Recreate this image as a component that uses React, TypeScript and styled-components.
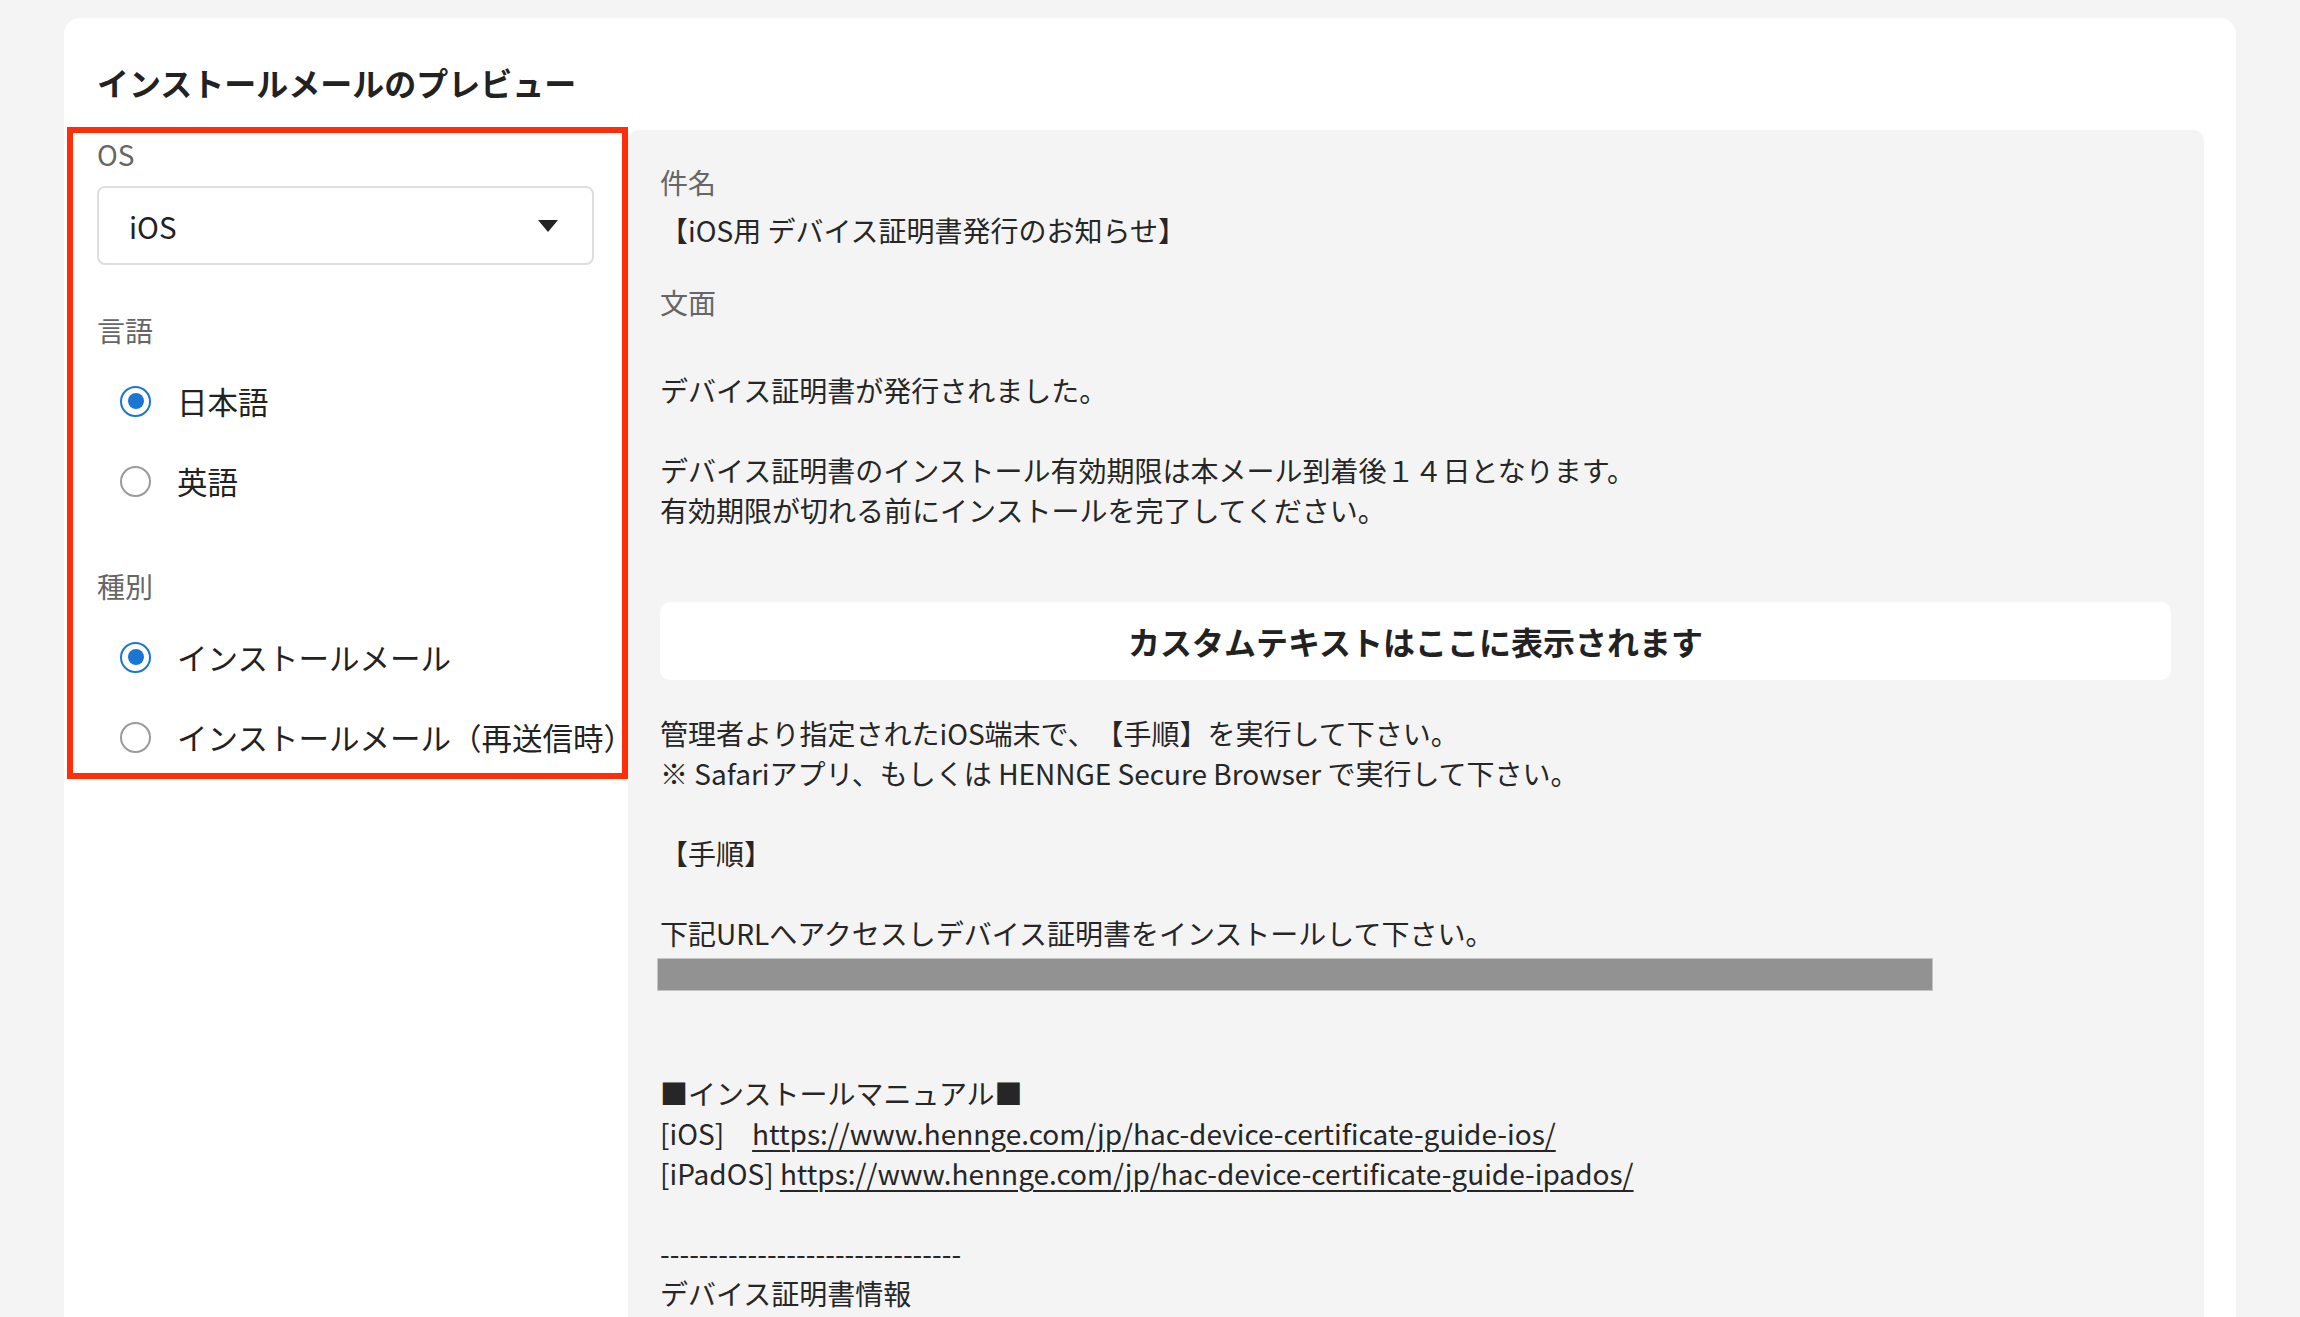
import styled, {createGlobalStyle} from 'styled-components';

const GlobalStyle = createGlobalStyle`
  body {
    margin: 0;
    background: #f4f4f4;
    color: #222;
    font-family: "Noto Sans CJK JP", "Noto Sans", sans-serif;
    text-spacing-trim: space-all;
  }
`;

const Page = styled.div`
  padding: 18px 64px 0;
`;

const Card = styled.section`
  background: #fff;
  border-radius: 16px 16px 0 0;
  padding: 40px 32px 0 33px;
  min-height: 1299px;
  box-sizing: border-box;
`;

const Heading = styled.h2`
  margin: 0 0 24px;
  font-size: 32px;
  line-height: 48px;
  font-weight: 700;
  color: #222;
`;

const Body = styled.div`
  display: flex;
  align-items: flex-start;
  gap: 34px;
`;

const Settings = styled.div`
  position: relative;
  flex: 0 0 497px;
  width: 497px;
  min-width: 0;
  padding-top: 4px;
`;

// red annotation frame drawn over the settings column
const Annotation = styled.div`
  position: absolute;
  top: -3px;
  left: -30px;
  right: -34px;
  bottom: -2px;
  border: 6.5px solid #ff2d0a;
  pointer-events: none;
`;

const Group = styled.div<{$first?: boolean}>`
  margin-top: ${(p) => (p.$first ? 0 : 45)}px;
`;

const FieldLabel = styled.div`
  font-size: 28px;
  line-height: 40px;
  color: #666;
`;

const Select = styled.div`
  margin-top: 12px;
  height: 79px;
  box-sizing: border-box;
  border: 2px solid #dedede;
  border-radius: 8px;
  background: #fff;
  display: flex;
  align-items: center;
  justify-content: space-between;
  padding: 0 34px 0 30px;
  font-size: 29.5px;
  color: #222;
`;

const RadioList = styled.div`
  margin-top: 11px;
  display: flex;
  flex-direction: column;
`;

const RadioRow = styled.label`
  height: 80px;
  display: flex;
  align-items: center;
  gap: 26px;
  padding-left: 23px;
  font-size: 30.5px;
  color: #222;
  white-space: nowrap;
`;

const RadioMark = styled.span<{$checked?: boolean}>`
  width: 31px;
  height: 31px;
  box-sizing: border-box;
  border-radius: 50%;
  border: 2.5px solid ${(p) => (p.$checked ? '#1976d2' : '#9a9a9a')};
  display: flex;
  align-items: center;
  justify-content: center;
  flex-shrink: 0;
  &::after {
    content: '';
    width: 16px;
    height: 16px;
    border-radius: 50%;
    background: #1976d2;
    display: ${(p) => (p.$checked ? 'block' : 'none')};
  }
`;

const Preview = styled.div`
  flex: 1;
  min-width: 0;
  background: #f4f4f4;
  border-radius: 10px;
  padding: 32px 33px 60px 32px;
  color: #262626;
`;

const FieldValue = styled.div`
  margin-top: 8px;
  font-size: 28px;
  line-height: 40px;
`;

const Section = styled.div`
  margin-top: 32px;
`;

const MailText = styled.div`
  margin-top: 8px;
  font-size: 28px;
  line-height: 40px;
  white-space: pre-wrap;
`;

const CustomBox = styled.div`
  margin: 72px 0 33px;
  height: 78px;
  border-radius: 10px;
  background: #fff;
  display: flex;
  align-items: center;
  justify-content: center;
  font-size: 32px;
  font-weight: 700;
  color: #222;
`;

const Redacted = styled.div`
  width: 1276px;
  height: 33px;
  margin: 5px 0 2px -3px;
  box-sizing: border-box;
  border: 1px solid #c6c6c6;
  background: #929292;
`;

const MailLink = styled.a`
  color: inherit;
  text-decoration: underline;
  text-decoration-thickness: 2px;
  text-underline-offset: 5px;
`;

const Radio = ({label, checked}: {label: string; checked?: boolean}) => (
  <RadioRow>
    <RadioMark $checked={checked} />
    {label}
  </RadioRow>
);

export default function App() {
  return (
    <Page>
      <GlobalStyle />
      <Card>
        <Heading>インストールメールのプレビュー</Heading>
        <Body>
          <Settings>
            <Group $first>
              <FieldLabel>OS</FieldLabel>
              <Select>
                iOS
                <svg width="20" height="12" viewBox="0 0 20 12">
                  <path d="M0 0h20L10 12z" fill="#222" />
                </svg>
              </Select>
            </Group>
            <Group>
              <FieldLabel>言語</FieldLabel>
              <RadioList>
                <Radio label="日本語" checked />
                <Radio label="英語" />
              </RadioList>
            </Group>
            <Group>
              <FieldLabel>種別</FieldLabel>
              <RadioList>
                <Radio label="インストールメール" checked />
                <Radio label="インストールメール（再送信時）" />
              </RadioList>
            </Group>
            <Annotation />
          </Settings>

          <Preview>
            <FieldLabel>件名</FieldLabel>
            <FieldValue>【iOS用 デバイス証明書発行のお知らせ】</FieldValue>
            <Section>
              <FieldLabel>文面</FieldLabel>
              <MailText>
                {'\nデバイス証明書が発行されました。\n\nデバイス証明書のインストール有効期限は本メール到着後１４日となります。\n有効期限が切れる前にインストールを完了してください。'}
              </MailText>
              <CustomBox>カスタムテキストはここに表示されます</CustomBox>
              <MailText>
                {'管理者より指定されたiOS端末で、【手順】を実行して下さい。\n※ Safariアプリ、もしくは HENNGE Secure Browser で実行して下さい。\n\n【手順】\n\n下記URLへアクセスしデバイス証明書をインストールして下さい。'}
              </MailText>
              <Redacted />
              <MailText style={{marginTop: 0}}>
                {'\n\n■インストールマニュアル■\n[iOS]　'}
                <MailLink href="#">https://www.hennge.com/jp/hac-device-certificate-guide-ios/</MailLink>
                {'\n[iPadOS] '}
                <MailLink href="#">https://www.hennge.com/jp/hac-device-certificate-guide-ipados/</MailLink>
                {'\n\n-------------------------------\nデバイス証明書情報'}
              </MailText>
            </Section>
          </Preview>
        </Body>
      </Card>
    </Page>
  );
}
